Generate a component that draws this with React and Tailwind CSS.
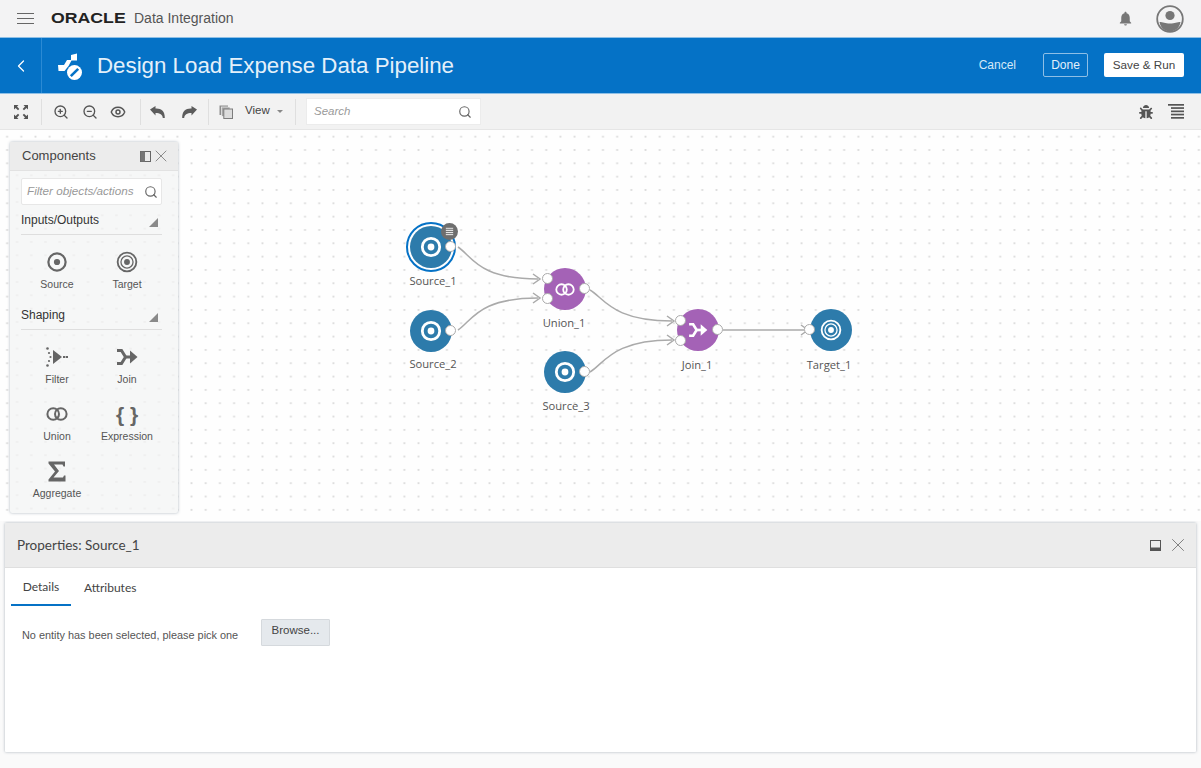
import React from "react";
import { Search, ZoomIn, ZoomOut, Eye, X, ChevronLeft } from "lucide-react";
import { MdNotifications } from "react-icons/md";
import { FaBug } from "react-icons/fa";

const TargetGlyph = ({ size = 24, color = "#666" }) => (
  <svg width={size} height={size} viewBox="0 0 24 24" fill="none" stroke={color}>
    <circle cx="12" cy="12" r="10.2" strokeWidth="2" />
    <circle cx="12" cy="12" r="6.6" strokeWidth="1.4" />
    <circle cx="12" cy="12" r="3.2" fill={color} stroke="none" />
  </svg>
);
const SourceGlyph = ({ size = 24, color = "#666" }) => (
  <svg width={size} height={size} viewBox="0 0 24 24" fill="none" stroke={color}>
    <circle cx="12" cy="12" r="9.4" strokeWidth="2.4" />
    <circle cx="12" cy="12" r="3.4" fill={color} stroke="none" />
  </svg>
);
const UnionGlyph = ({ color = "#666", w = 22, h = 14, sw = 2 }) => (
  <svg width={w} height={h} viewBox="0 0 22 14" fill="none" stroke={color} strokeWidth={sw}>
    <circle cx="7.2" cy="7" r="5.8" />
    <circle cx="14.8" cy="7" r="5.8" />
  </svg>
);
const JoinGlyph = ({ color = "#666", w = 22, h = 18 }) => (
  <svg width={w} height={h} viewBox="0 0 22 18" fill="none">
    <path d="M1 2.5h4.5l4 6.5-4 6.5H1" stroke={color} strokeWidth="3" />
    <path d="M9.5 9h6" stroke={color} strokeWidth="3" />
    <path d="M14 2.5l7.5 6.5-7.5 6.5z" fill={color} />
  </svg>
);
const FilterGlyph = () => (
  <svg width="22" height="20" viewBox="0 0 22 20" fill="#666">
    <path d="M7 3l9 7-9 7z" />
    <rect x="17" y="9" width="2.4" height="2" />
    <rect x="20" y="9" width="2" height="2" />
    <circle cx="1.5" cy="1.5" r="1.3" /><circle cx="3" cy="6" r="1.1" /><circle cx="4.5" cy="10" r="1.1" /><circle cx="3" cy="14" r="1.1" /><circle cx="1.5" cy="18.5" r="1.3" />
  </svg>
);
const SigmaGlyph = () => (
  <svg width="18" height="21" viewBox="0 0 18 21" fill="#666">
    <path d="M0.5 0.5H17V5.5H15.5L14.5 3.5H6L11 10 5.500 16.500H15L16 14.500H17.500V20.500H0.5V18.500L7 10.500 0.5 2.500z" />
  </svg>
);
const ExpandGlyph = () => (
  <svg width="16" height="16" viewBox="0 0 16 16" fill="#555">
    <path d="M1 1h4.5L4 2.6 6.3 5 5 6.3 2.6 4 1 5.5z" />
    <path d="M15 1v4.5L13.4 4 11 6.3 9.7 5 12 2.6 10.5 1z" />
    <path d="M1 15v-4.5L2.6 12 5 9.7 6.3 11 4 13.4 5.5 15z" />
    <path d="M15 15h-4.500L12 13.4 9.7 11 11 9.700 13.400 12 15 10.500z" />
  </svg>
);
const CopyGlyph = () => (
  <svg width="14" height="14" viewBox="0 0 14 14">
    <rect x="0.5" y="0.5" width="8.500" height="9.500" fill="#8e8e8e" />
    <rect x="2.500" y="2" width="8.500" height="9.500" fill="#a6a6a6" stroke="#f2f2f2" strokeWidth="0.700" />
    <rect x="4.800" y="4" width="8.700" height="9.500" fill="#dcdcdc" stroke="#7d7d7d" strokeWidth="1" />
  </svg>
);
const UndoGlyph = () => (
  <svg width="15" height="12" viewBox="0 0 15 12" fill="#5c5c5c">
    <path d="M0 3.500 L5.500 0 V2.600 C11 2.200 15 5 14.800 12 H12.800 C12.600 8.800 10 7 5.500 7 V9.500 z" />
  </svg>
);
const RedoGlyph = () => (
  <svg width="15" height="12" viewBox="0 0 15 12" fill="#5c5c5c">
    <path d="M15 3.500 L9.500 0 V2.600 C4 2.200 0 5 0.200 12 H2.200 C2.400 8.800 5 7 9.500 7 V9.500 z" />
  </svg>
);
const ListLines = () => (
  <svg width="16" height="15" viewBox="0 0 16 15" fill="#555">
    <rect x="0" y="0" width="16" height="1.700" />
    <rect x="3" y="3.200" width="13" height="1.700" />
    <rect x="3" y="6.500" width="13" height="1.700" />
    <rect x="3" y="9.700" width="13" height="1.700" />
    <rect x="3" y="13" width="13" height="1.700" />
  </svg>
);
const PanelLeftGlyph = () => (
  <svg width="11" height="11" viewBox="0 0 11 11">
    <rect x="0.5" y="0.5" width="10" height="10" fill="none" stroke="#666" />
    <rect x="0.5" y="0.5" width="4.500" height="10" fill="#777" />
  </svg>
);
const PanelBottomGlyph = () => (
  <svg width="11" height="11" viewBox="0 0 11 11">
    <rect x="0.5" y="0.5" width="10" height="10" fill="none" stroke="#555" />
    <rect x="0.5" y="7.500" width="10" height="3" fill="#555" />
  </svg>
);
const Sep = () => <div className="w-px h-[26px] bg-[#dfdfdf]" />;

function Item({ icon, label }) {
  return (
    <div className="flex flex-col items-center h-[57px]">
      <div className="flex items-center justify-center h-[26px] mt-[1px]">{icon}</div>
      <div className="text-[10.5px] text-[#555] mt-[1.500px] leading-[14px]">{label}</div>
    </div>
  );
}

function Section({ title, className }) {
  return (
    <div className={`flex items-center justify-between border-b border-[#dedede] h-[30px] ${className}`}>
      <span className="text-[12px] text-[#333]">{title}</span>
      <span className="w-0 h-0 mr-[4px] mt-[5px] border-l-[9px] border-l-transparent border-b-[9px] border-b-[#8a8a8a]" />
    </div>
  );
}

function Port({ className }) {
  return <span className={`absolute w-[11px] h-[11px] rounded-full bg-white border border-[#aaa] ${className}`} />;
}

function Node({ pos, color, label, labelPos, children, ports }) {
  return (
    <>
      <div className={`absolute w-[42px] h-[42px] rounded-full flex items-center justify-center ${color} ${pos}`}>
        {children}
        {ports}
      </div>
      <div className={`absolute w-[80px] text-center text-[11.2px] leading-[14px] text-[#555] ${labelPos}`} style={{ fontFamily: "'Open Sans', sans-serif" }}>{label}</div>
    </>
  );
}

const SourceIcon = () => (
  <svg width="22" height="22" viewBox="0 0 22 22" fill="none">
    <circle cx="11" cy="11" r="8.700" stroke="#fff" strokeWidth="2.800" />
    <circle cx="11" cy="11" r="3.400" fill="#fff" />
  </svg>
);

const edges = [
  "M458 247 C 472 256, 478 279, 538 279",
  "M458 330 C 472 321, 478 298, 538 298",
  "M590 290 C 604 298, 612 321, 672 321",
  "M590 372 C 604 364, 612 340, 672 340",
  "M723 330 L 804 330",
];
const heads = [
  "M533 274 L540 279 L533 284",
  "M533 293 L540 298 L533 303",
  "M667 316 L674 321 L667 326",
  "M667 335 L674 340 L667 345",
  "M801 325 L808 330 L801 335",
];

export default function App() {
  return (
    <div className="w-[1201px] h-[768px] flex flex-col overflow-hidden bg-[#fbfbfb] text-[#444]" style={{ fontFamily: "'Liberation Sans', sans-serif" }}>
      {/* Top bar */}
      <header className="h-[37px] bg-[#f3f3f4] flex items-center pl-[17px] pr-[17px]">
        <div className="flex flex-col gap-[3.500px] w-[17px]">
          <span className="h-[1.500px] bg-[#666]" /><span className="h-[1.500px] bg-[#666]" /><span className="h-[1.500px] bg-[#666]" />
        </div>
        <span className="ml-[17px] w-[76px] text-[14.500px] font-bold text-[#222] leading-none origin-left scale-x-[1.220] whitespace-nowrap">ORACLE</span>
        <span className="ml-[7px] text-[14px] text-[#555]">Data Integration</span>
        <div className="ml-auto flex items-center">
          <MdNotifications size={17} color="#777" />
          <svg className="ml-[22px]" width="28" height="28" viewBox="0 0 28 28">
            <circle cx="14" cy="14" r="12.800" fill="#f3f3f4" stroke="#777" strokeWidth="1.800" />
            <circle cx="14" cy="10.500" r="4.600" fill="#777" />
            <path d="M3.500 17 C7 17 9 18.500 14 18.500 S21 17 24.500 17 C23.500 23 19 26.500 14 26.500 S4.500 23 3.500 17z" fill="#777" />
          </svg>
        </div>
      </header>

      {/* Blue title bar */}
      <div className="h-[57px] bg-[#0572c6] border-y border-y-[#8fc0e6] flex items-center">
        <div className="w-[42px] h-full border-r border-r-[#2b8ad4] flex items-center justify-center">
          <ChevronLeft size={20} color="#fff" strokeWidth={1.500} />
        </div>
        <svg className="ml-[14px]" width="29" height="29" viewBox="0 0 29 29">
          <path d="M2 14 H8 L11 9 H15 V4 L21 2.500 V9.500 H15.500 L12.500 15 L8.500 20 H2.500z" fill="#fff" />
          <circle cx="18.500" cy="21.500" r="7.500" fill="#fff" />
          <path d="M14.800 25.200 L22.200 17.800" stroke="#0572c6" strokeWidth="2.600" />
        </svg>
        <h1 className="ml-[12px] text-[22.300px] font-normal text-[#e4f0fa]">Design Load Expense Data Pipeline</h1>
        <div className="ml-auto flex items-center pr-[17px] pb-[2px]">
          <span className="text-[12px] text-[#d5e8f7]">Cancel</span>
          <span className="ml-[27px] w-[45px] h-[24px] border border-[#8ebfe6] rounded-[2px] flex items-center justify-center text-[12px] text-[#e4f0fa]">Done</span>
          <span className="ml-[16px] w-[80px] h-[24px] bg-white rounded-[2px] flex items-center justify-center text-[11.700px] text-[#444]">Save &amp; Run</span>
        </div>
      </div>

      {/* Toolbar */}
      <div className="h-[36px] bg-[#f2f2f2] border-b border-b-[#e6e6e6] flex items-center pl-[13px] pr-[17px] text-[#555]">
        <div className="w-[16px]"><ExpandGlyph /></div>
        <div className="ml-[12px]"><Sep /></div>
        <ZoomIn className="ml-[11px]" size={16} strokeWidth={2} color="#555" />
        <ZoomOut className="ml-[13px]" size={16} strokeWidth={2} color="#555" />
        <Eye className="ml-[12px]" size={16} strokeWidth={2.200} color="#555" />
        <div className="ml-[14px]"><Sep /></div>
        <div className="ml-[9px]"><UndoGlyph /></div>
        <div className="ml-[17px]"><RedoGlyph /></div>
        <div className="ml-[11px]"><Sep /></div>
        <div className="ml-[10px] mt-[1px]"><CopyGlyph /></div>
        <span className="ml-[12px] w-[25px] text-[11.500px] text-[#444] pb-[2px]">View</span>
        <span className="ml-[7px] w-0 h-0 border-x-[3px] border-x-transparent border-t-[3px] border-t-[#888]" />
        <div className="ml-[12px]"><Sep /></div>
        <div className="ml-[10px] w-[175px] h-[27px] bg-white border border-[#ececec] flex items-center justify-between pl-[7px] pr-[8px]">
          <span className="text-[11.500px] italic text-[#9a9a9a]">Search</span>
          <Search size={14} color="#666" strokeWidth={2} />
        </div>
        <div className="ml-auto flex items-center gap-[15px]">
          <FaBug size={14} color="#555" />
          <ListLines />
        </div>
      </div>

      {/* Canvas */}
      <main className="relative h-[391px] bg-[#fefefe] bg-[radial-gradient(circle,#dcdcdc_0.9px,transparent_1.200px)] bg-[length:14.200px_13.333px]">
        <svg className="absolute left-0 top-[-130px] pointer-events-none" width="1201" height="520" fill="none" stroke="#aaaaaa" strokeWidth="1.500">
          {edges.map((d) => <path key={d} d={d} />)}
          {heads.map((d) => <path key={d} d={d} />)}
        </svg>

        {/* Source_1 selection ring */}
        <div className="absolute left-[406px] top-[92px] w-[50px] h-[50px] rounded-full border-2 border-[#0572c6] bg-white" />
        <Node pos="left-[410px] top-[96px]" color="bg-[#2d7bab]" label="Source_1" labelPos="left-[393px] top-[144px]"
          ports={<Port className="left-[35px] top-[15px]" />}>
          <SourceIcon />
        </Node>
        <div className="absolute left-[441px] top-[93px] w-[17px] h-[17px] rounded-full bg-[#6e6e6e] flex items-center justify-center">
          <div className="scale-[0.6]"><svg width="13" height="13" viewBox="0 0 13 13" fill="#e6e6e6"><rect width="13" height="2" /><rect y="3.600" width="13" height="2" /><rect y="7.200" width="13" height="2" /><rect y="10.800" width="13" height="2" /></svg></div>
        </div>

        <Node pos="left-[410px] top-[180px]" color="bg-[#2d7bab]" label="Source_2" labelPos="left-[393px] top-[227px]"
          ports={<Port className="left-[35px] top-[15px]" />}>
          <SourceIcon />
        </Node>

        <Node pos="left-[544px] top-[138px]" color="bg-[#a462b6]" label="Union_1" labelPos="left-[524px] top-[186px]"
          ports={<>
            <Port className="left-[-2px] top-[5px]" />
            <Port className="left-[-2px] top-[25px]" />
            <Port className="left-[35px] top-[15px]" />
          </>}>
          <UnionGlyph color="#fff" w={20} h={13} />
        </Node>

        <Node pos="left-[544px] top-[221px]" color="bg-[#2d7bab]" label="Source_3" labelPos="left-[526px] top-[269px]"
          ports={<Port className="left-[35px] top-[15px]" />}>
          <SourceIcon />
        </Node>

        <Node pos="left-[677px] top-[179px]" color="bg-[#a462b6]" label="Join_1" labelPos="left-[657px] top-[228px]"
          ports={<>
            <Port className="left-[-2px] top-[6px]" />
            <Port className="left-[-2px] top-[26px]" />
            <Port className="left-[35px] top-[15px]" />
          </>}>
          <JoinGlyph color="#fff" w={20} h={16} />
        </Node>

        <Node pos="left-[810px] top-[179px]" color="bg-[#2d7bab]" label="Target_1" labelPos="left-[789px] top-[228px]"
          ports={<Port className="left-[-6px] top-[15px]" />}>
          <TargetGlyph size={22} color="#fff" />
        </Node>

        {/* Components panel */}
        <aside className="absolute left-[10px] top-[12px] w-[168px] h-[371px] bg-[#f6f7f7] bg-[radial-gradient(circle,#efefef_1px,transparent_1.300px)] bg-[length:14.200px_13.333px] rounded-[2px] shadow-[0_0_3px_rgba(70,90,110,0.45)]">
          <div className="h-[29px] bg-[#ececec] border-b border-b-[#e2e2e2] flex items-center pl-[12px] pr-[7px]">
            <span className="text-[13px] text-[#444]">Components</span>
            <div className="ml-auto flex items-center">
              <PanelLeftGlyph />
              <X size={20} color="#777" strokeWidth={1} />
            </div>
          </div>
          <div className="pl-[11px] pr-[16px] pt-[7px]">
            <div className="h-[27px] bg-white border border-[#e7e7e7] rounded-[2px] flex items-center justify-between pl-[5px] pr-[3px]">
              <span className="text-[11.700px] italic text-[#999] whitespace-nowrap pb-[1px]">Filter objects/actions</span>
              <Search size={14} color="#666" strokeWidth={2} />
            </div>
            <Section title="Inputs/Outputs" className="pt-[1px]" />
            <div className="grid grid-cols-2 mt-[13px] ml-[1px]">
              <Item icon={<SourceGlyph size={22} />} label="Source" />
              <Item icon={<TargetGlyph size={22} />} label="Target" />
            </div>
            <Section title="Shaping" className="mt-[-5px]" />
            <div className="grid grid-cols-2 mt-[13px] ml-[1px]">
              <Item icon={<FilterGlyph />} label="Filter" />
              <Item icon={<JoinGlyph />} label="Join" />
              <Item icon={<UnionGlyph />} label="Union" />
              <Item icon={<span className="text-[21px] font-bold text-[#666] leading-none">{"{ }"}</span>} label="Expression" />
              <Item icon={<SigmaGlyph />} label="Aggregate" />
            </div>
          </div>
        </aside>
      </main>

      {/* Properties */}
      <div className="flex-1 px-[5px] pt-[2px] pb-[16px] bg-[#fafafa]">
        <section className="h-full bg-white rounded-[1px] shadow-[0_0_3px_rgba(70,90,110,0.45)]">
          <div className="h-[45px] bg-[#ececec] border-b border-b-[#dfdfdf] flex items-center pl-[12px] pr-[7px]">
            <span className="text-[13.500px] text-[#444]" style={{ fontFamily: "Lato, sans-serif" }}>Properties: Source_1</span>
            <div className="ml-auto flex items-center gap-[6px]">
              <PanelBottomGlyph />
              <X size={22} color="#777" strokeWidth={1} />
            </div>
          </div>
          <div className="flex pl-[6px] h-[38px] pt-[1px] text-[12px] text-[#444]" style={{ fontFamily: "Lato, sans-serif" }}>
            <div className="w-[60px] h-full border-b-2 border-b-[#0572c6] flex items-center justify-center">Details</div>
            <div className="ml-[13px] h-full flex items-center">Attributes</div>
          </div>
          <div className="flex items-start pl-[17px] pt-[13px]">
            <span className="text-[10.900px] text-[#555] w-[239px] pt-[8px]">No entity has been selected, please pick one</span>
            <span className="w-[69px] h-[27px] bg-[#e5e9ed] border border-[#d5d9dd] rounded-[1px] flex items-center justify-center text-[11.500px] text-[#444] pb-[3px]">Browse...</span>
          </div>
        </section>
      </div>
    </div>
  );
}
